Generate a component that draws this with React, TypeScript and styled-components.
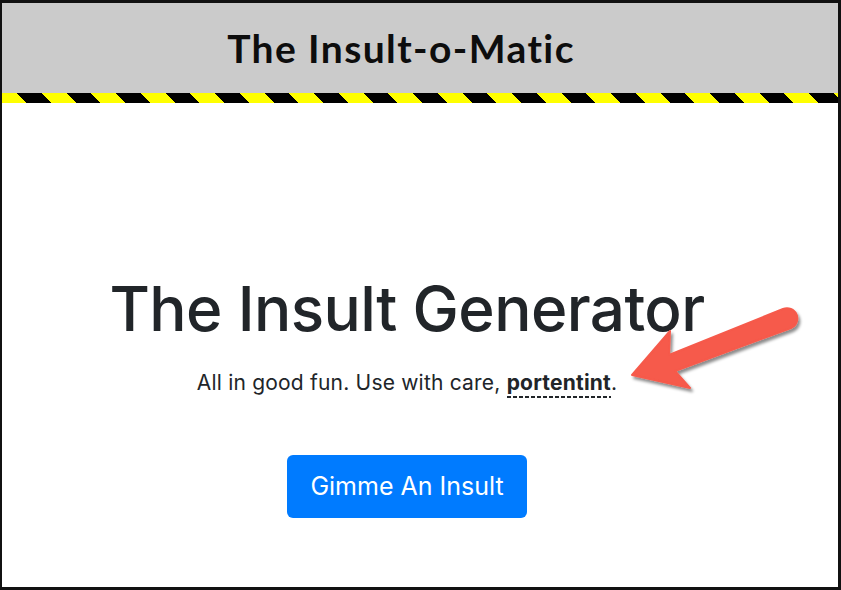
import styled, { createGlobalStyle } from 'styled-components';

const GlobalStyle = createGlobalStyle`
	html, body {
		margin: 0;
		padding: 0;
		background: #ffffff;
	}
	* {
		box-sizing: border-box;
	}
`;

const Frame = styled.div`
	width: 841px;
	height: 590px;
	border-style: solid;
	border-color: #111111;
	border-width: 3px 3px 3px 2px;
	display: flex;
	flex-direction: column;
	position: relative;
	overflow: hidden;
	background: #ffffff;
`;

const Header = styled.header`
	height: 90px;
	background: #cbcbcb;
	display: flex;
	align-items: center;
	justify-content: center;
	padding-right: 38px;
	flex-shrink: 0;
`;

const SiteTitle = styled.h1`
	margin: 0;
	font-family: Lato, 'Liberation Sans', sans-serif;
	font-weight: 700;
	font-size: 39px;
	letter-spacing: 1.4px;
	color: #0d0d0d;
`;

const HazardStripe = styled.div`
	height: 10px;
	flex-shrink: 0;
	background: repeating-linear-gradient(
		45deg,
		#ffff00 0px,
		#ffff00 17.5px,
		#000000 17.5px,
		#000000 35px
	);
`;

const Main = styled.main`
	flex: 1;
	display: flex;
	flex-direction: column;
	align-items: center;
	padding: 169px 26px 0 0;
	font-family: Inter, 'Liberation Sans', sans-serif;
	color: #212529;
`;

const Heading = styled.h2`
	margin: 0;
	font-size: 62px;
	font-weight: 500;
	line-height: 1.2;
	letter-spacing: -0.6px;
`;

const Lead = styled.p`
	margin: 22px 0 0;
	font-size: 21px;
	line-height: 1.45;
	font-weight: 400;
	letter-spacing: 0.2px;
`;

const Handle = styled.abbr`
	font-weight: 700;
	text-decoration: none;
	padding-bottom: 3px;
	background-image: linear-gradient(to right, #212529 62%, transparent 62%);
	background-size: 6px 2px;
	background-repeat: repeat-x;
	background-position: 0 100%;
`;

const InsultButton = styled.button`
	margin-top: 56px;
	height: 63px;
	padding: 0 23px;
	border: none;
	border-radius: 6px;
	background: #007bff;
	color: #ffffff;
	font-family: Inter, 'Liberation Sans', sans-serif;
	font-size: 25px;
	font-weight: 400;
	cursor: pointer;
`;

const Annotation = styled.svg`
	position: absolute;
	left: 598px;
	top: 287px;
	overflow: visible;
`;

const Arrow = () => (
	<Annotation width="220" height="120" viewBox="0 0 220 120">
		<defs>
			<filter id="arrowShadow" x="-20%" y="-20%" width="140%" height="140%">
				<feDropShadow dx="2" dy="3" stdDeviation="1.6" floodColor="#000" floodOpacity="0.45" />
			</filter>
		</defs>
		<path
			d="M 32 85 L 70 41 L 69 65 L 183 19 A 10 10 0 0 1 191 38 L 75 81 L 90 98 Z"
			fill="#f65a4b"
			strokeLinejoin="round"
			stroke="#f65a4b"
			strokeWidth="2"
			filter="url(#arrowShadow)"
		/>
	</Annotation>
);

export default function App() {
	return (
		<>
			<GlobalStyle />
			<Frame>
				<Header>
					<SiteTitle>The Insult-o-Matic</SiteTitle>
				</Header>
				<HazardStripe />
				<Main>
					<Heading>The Insult Generator</Heading>
					<Lead>
						All in good fun. Use with care, <Handle title="portentint">portentint</Handle>.
					</Lead>
					<InsultButton>Gimme An Insult</InsultButton>
				</Main>
				<Arrow />
			</Frame>
		</>
	);
}
